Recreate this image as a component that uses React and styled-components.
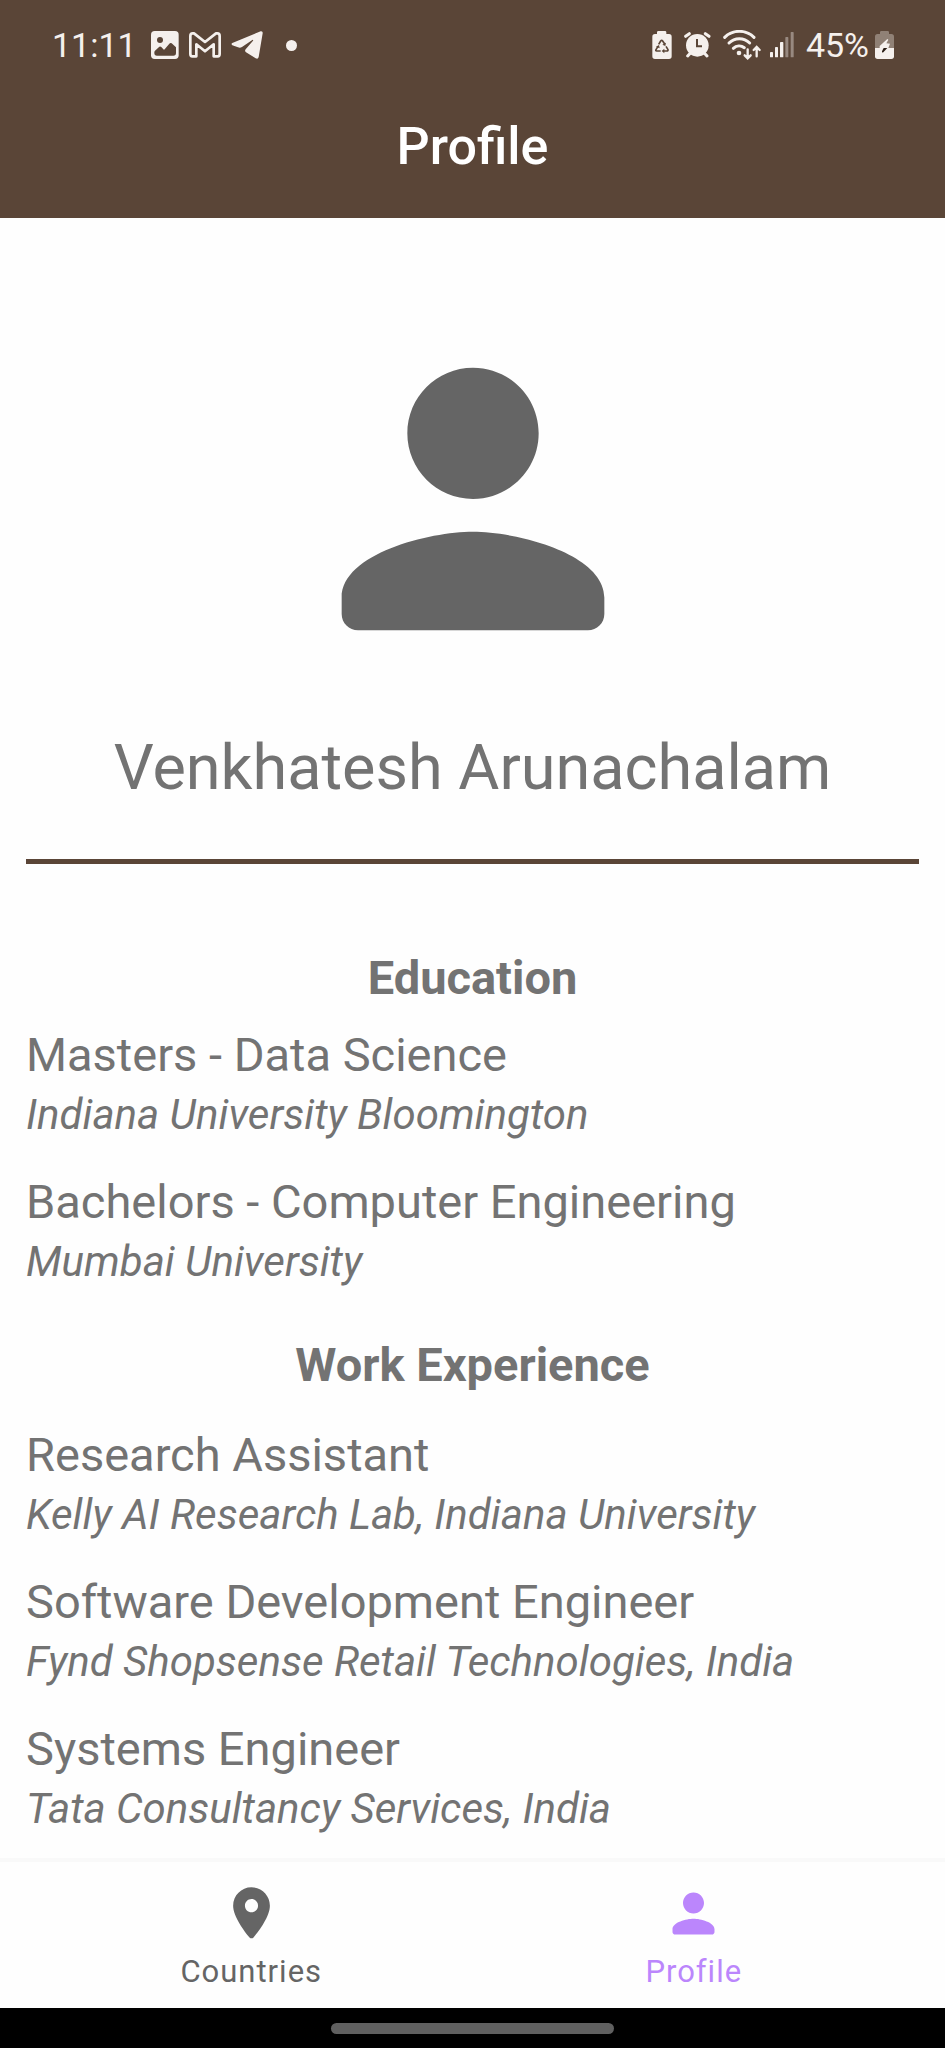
import React from 'react';
import styled, { createGlobalStyle } from 'styled-components';

const brown = '#5a4537';
const statusInk = '#f5f0ed';

const Global = createGlobalStyle`
  * { box-sizing: border-box; }
  body { margin: 0; background: #fefefe; font-family: Roboto, sans-serif; color: #737373; }
  h1, h2, h3, p { margin: 0; }
`;

const Screen = styled.div`
  display: flex;
  flex-direction: column;
  min-height: 100vh;
`;

const TopArea = styled.header`
  background: ${brown};
  color: #fff;
`;

const StatusBar = styled.div`
  display: flex;
  align-items: center;
  justify-content: space-between;
  height: 90px;
  padding: 0 51px 0 52px;
  color: ${statusInk};
  font-size: 34px;
  line-height: 40px;
`;

const StatusGroup = styled.div`
  display: flex;
  align-items: center;
  gap: ${(p) => p.$gap}px;
`;

const StatusIcon = styled.svg`
  display: block;
  flex: none;
  fill: currentColor;
`;

const Clock = styled.time`
  width: 89px;
`;

const Dot = styled.span`
  width: 11px;
  height: 11px;
  margin-left: 13px;
  border-radius: 50%;
  background: currentColor;
`;

const Title = styled.h1`
  height: 128px;
  padding-top: 23px;
  font-size: 52px;
  line-height: 68px;
  font-weight: 500;
  text-align: center;
`;

const Main = styled.main`
  flex: 1;
  padding: 84px 26px 20px;
`;

const Avatar = styled.svg`
  display: block;
  width: 394px;
  height: 394px;
  margin: 0 auto;
  fill: #656565;
`;

const Name = styled.h2`
  margin-top: 28px;
  padding-bottom: 47px;
  border-bottom: 5px solid ${brown};
  font-size: 63px;
  line-height: 88px;
  font-weight: 400;
  text-align: center;
`;

const Heading = styled.h2`
  margin: ${(p) => p.$top}px 0 ${(p) => p.$bottom}px;
  font-size: 47px;
  line-height: 60px;
  font-weight: 700;
  text-align: center;
`;

const Entries = styled.section`
  display: flex;
  flex-direction: column;
  gap: 28px;
`;

const Role = styled.h3`
  font-size: 47px;
  line-height: 62px;
  font-weight: 400;
`;

const Place = styled.p`
  padding-top: 1px;
  font-size: 42px;
  line-height: 56px;
  font-style: italic;
`;

const Nav = styled.nav`
  display: flex;
  height: 150px;
  padding: 0 30px;
  border-top: 4px solid #f9f9f9;
`;

const Tab = styled.a`
  flex: 1;
  display: flex;
  flex-direction: column;
  align-items: center;
  gap: 7px;
  padding-top: 20px;
  color: ${(p) => (p.$active ? '#bb86fc' : '#656565')};
  font-size: 31px;
  line-height: 40px;
  letter-spacing: 1px;
  text-decoration: none;
`;

const TabIcon = styled.svg`
  width: 63px;
  height: 63px;
  fill: currentColor;
`;

const SystemBar = styled.footer`
  display: flex;
  align-items: center;
  justify-content: center;
  height: 40px;
  background: #000;
`;

const Handle = styled.div`
  width: 30%;
  height: 11px;
  border-radius: 6px;
  background: #606060;
`;

const personPath =
  'M12 12c2.21 0 4-1.79 4-4s-1.79-4-4-4-4 1.79-4 4 1.79 4 4 4zm0 2c-2.67 0-8 1.34-8 4v1c0 .55.45 1 1 1h14c.55 0 1-.45 1-1v-1c0-2.66-5.33-4-8-4z';
const pinPath =
  'M12 2C8.13 2 5 5.13 5 9c0 4.17 4.42 9.92 6.24 12.11.4.48 1.13.48 1.53 0C14.58 18.92 19 13.17 19 9c0-3.87-3.13-7-7-7zm0 9.5c-1.38 0-2.5-1.12-2.5-2.5s1.12-2.5 2.5-2.5 2.5 1.12 2.5 2.5-1.12 2.5-2.5 2.5z';

const PictureIcon = () => (
  <StatusIcon width="28" height="28" viewBox="0 0 84 84" aria-hidden="true">
    <rect width="83" height="84" rx="11" />
    <circle cx="27" cy="27" r="9" fill={brown} />
    <path
      d="M10 64Q10 61 12 59L25 47Q28 45 31 48L37 55Q39 57 41 55L55 38Q58 34 62 37L75 49V66Q75 74 67 74H18Q10 74 10 66Z"
      fill={brown}
    />
  </StatusIcon>
);

const MailIcon = () => (
  <StatusIcon width="32" height="26" viewBox="0 0 96 78" aria-hidden="true">
    <path
      d="M4 12Q4 4 11 4H15L48 30L81 4H85Q92 4 92 12V66Q92 73 86 73H74V37L48 58L22 37V73H10Q4 73 4 66Z"
      fill="none"
      stroke="currentColor"
      strokeWidth="8"
      strokeLinejoin="round"
    />
  </StatusIcon>
);

const PlaneIcon = () => (
  <StatusIcon width="32" height="28" viewBox="0 0 96 84" aria-hidden="true">
    <path d="M4 36L89 1Q96 0 95 7L83 78Q81 86 74 82L45 64Q40 60 44 55L66 29Q68 25 64 27L33 48Q27 52 21 49L4 43Q-1 39 4 36Z" />
  </StatusIcon>
);

const RecycleBatteryIcon = () => (
  <StatusIcon width="20" height="28" viewBox="0 0 60 84" aria-hidden="true">
    <path d="M15 9V4Q15 0 19 0H39Q43 0 43 4V9H51Q59 9 59 17V76Q59 84 51 84H9Q1 84 1 76V17Q1 9 9 9Z" />
    <g fill="none" stroke={brown} strokeWidth="5" strokeLinejoin="round">
      <path d="M20 40L26 30Q29 26 32 30L38 39" />
      <path d="M42 46L48 56Q49 60 44 60H34" />
      <path d="M26 60H14Q10 60 12 56L18 46" />
    </g>
    <path d="M42 35L40 45L31 41ZM37 53V67L29 60ZM12 47L21 42L23 52Z" fill={brown} />
  </StatusIcon>
);

const AlarmIcon = () => (
  <StatusIcon width="27" height="26" viewBox="0 0 81 78" aria-hidden="true">
    <circle cx="40" cy="40" r="34" />
    <path d="M5 13L16 5M64 5L75 13M11 72L20 62M69 72L60 62" stroke="currentColor" strokeWidth="9" strokeLinecap="round" />
    <path d="M39 21V43H54" fill="none" stroke={brown} strokeWidth="6" />
  </StatusIcon>
);

const WifiIcon = () => (
  <StatusIcon width="39" height="30" viewBox="0 0 117 90" aria-hidden="true">
    <g fill="none" stroke="currentColor" strokeWidth="9" strokeLinecap="round">
      <path d="M5 22A63 63 0 0 1 93 22" />
      <path d="M18 39A44 44 0 0 1 80 39" />
      <path d="M31 55A26 26 0 0 1 64 53" />
    </g>
    <circle cx="48" cy="69" r="7" />
    <path d="M74 58V84M65 76L74 85L83 76M101 79V53M92 60L101 51L110 60" fill="none" stroke="currentColor" strokeWidth="7" strokeLinecap="round" />
  </StatusIcon>
);

const SignalIcon = () => (
  <StatusIcon width="24" height="26" viewBox="0 0 72 78" aria-hidden="true">
    <rect x="0" y="60" width="9" height="16" rx="2" />
    <rect x="15" y="45" width="9" height="31" rx="2" />
    <rect x="30" y="30" width="10" height="46" rx="2" />
    <g opacity="0.4">
      <rect x="46" y="15" width="9" height="61" rx="2" />
      <rect x="62" y="0" width="9" height="76" rx="2" />
    </g>
  </StatusIcon>
);

const ChargingIcon = () => (
  <StatusIcon width="19" height="28" viewBox="0 0 57 84" aria-hidden="true">
    <path d="M15 9V4Q15 0 19 0H38Q42 0 42 4V9H49Q57 9 57 17V51H0V17Q0 9 8 9H15Z" opacity="0.35" />
    <path d="M0 51H57V76Q57 84 49 84H8Q0 84 0 76Z" />
    <path d="M37 24L14 45V51H40L45 38L34 37L40 26Z" />
    <path d="M26 51H37L25 64Q20 66 21 61Z" fill="#2a1d15" />
  </StatusIcon>
);

const education = [
  ['Masters - Data Science', 'Indiana University Bloomington'],
  ['Bachelors - Computer Engineering', 'Mumbai University'],
];
const work = [
  ['Research Assistant', 'Kelly AI Research Lab, Indiana University'],
  ['Software Development Engineer', 'Fynd Shopsense Retail Technologies, India'],
  ['Systems Engineer', 'Tata Consultancy Services, India'],
];

const EntryList = ({ items }) => (
  <Entries>
    {items.map(([role, place]) => (
      <article key={role}>
        <Role>{role}</Role>
        <Place>{place}</Place>
      </article>
    ))}
  </Entries>
);

export default function App() {
  return (
    <>
      <Global />
      <Screen>
        <TopArea>
          <StatusBar>
            <StatusGroup $gap={10}>
              <Clock>11:11</Clock>
              <PictureIcon />
              <MailIcon />
              <PlaneIcon />
              <Dot />
            </StatusGroup>
            <StatusGroup $gap={12}>
              <RecycleBatteryIcon />
              <AlarmIcon />
              <StatusGroup $gap={8}>
                <WifiIcon />
                <SignalIcon />
              </StatusGroup>
              <StatusGroup $gap={6}>
                <span>45%</span>
                <ChargingIcon />
              </StatusGroup>
            </StatusGroup>
          </StatusBar>
          <Title>Profile</Title>
        </TopArea>
        <Main>
          <Avatar viewBox="0 0 24 24" aria-hidden="true">
            <path d={personPath} />
          </Avatar>
          <Name>Venkhatesh Arunachalam</Name>
          <Heading $top={84} $bottom={16}>Education</Heading>
          <EntryList items={education} />
          <Heading $top={45} $bottom={29}>Work Experience</Heading>
          <EntryList items={work} />
        </Main>
        <Nav>
          <Tab href="#countries">
            <TabIcon viewBox="0 0 24 24" aria-hidden="true"><path d={pinPath} /></TabIcon>
            Countries
          </Tab>
          <Tab href="#profile" $active aria-current="page">
            <TabIcon viewBox="0 0 24 24" aria-hidden="true"><path d={personPath} /></TabIcon>
            Profile
          </Tab>
        </Nav>
        <SystemBar>
          <Handle />
        </SystemBar>
      </Screen>
    </>
  );
}
